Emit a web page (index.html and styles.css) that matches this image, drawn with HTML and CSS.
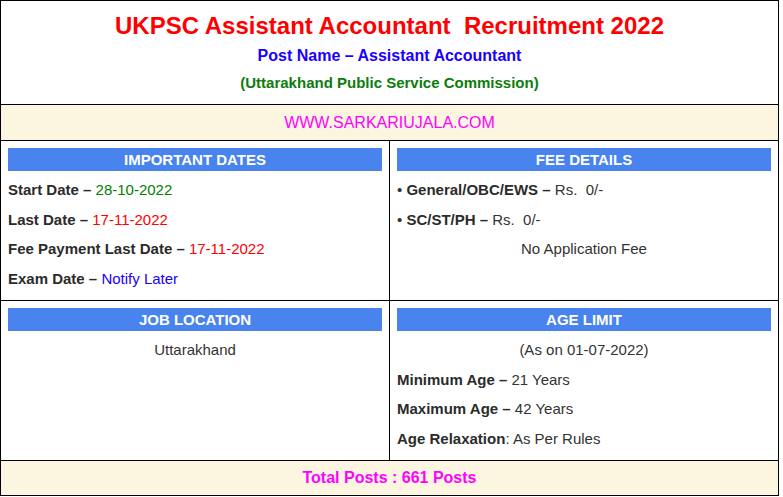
FILE: index.html
```html
<!DOCTYPE html>
<html>
<head>
<meta charset="utf-8">
<link rel="stylesheet" href="styles.css">
</head>
<body>
<div class="board">
  <div class="head">
    <div class="title">UKPSC Assistant Accountant&nbsp; Recruitment 2022</div>
    <div class="post">Post Name – Assistant Accountant</div>
    <div class="org">(Uttarakhand Public Service Commission)</div>
  </div>
  <div class="band site">WWW.SARKARIUJALA.COM</div>
  <div class="grid">
    <div class="cell">
      <div class="cap">IMPORTANT DATES</div>
      <div class="line"><b>Start Date –</b> <span class="green">28-10-2022</span></div>
      <div class="line"><b>Last Date –</b> <span class="red">17-11-2022</span></div>
      <div class="line"><b>Fee Payment Last Date –</b> <span class="red">17-11-2022</span></div>
      <div class="line"><b>Exam Date –</b> <span class="blue">Notify Later</span></div>
    </div>
    <div class="cell">
      <div class="cap">FEE DETAILS</div>
      <div class="line">• <b>General/OBC/EWS –</b> Rs.&nbsp; 0/-</div>
      <div class="line">• <b>SC/ST/PH –</b> Rs.&nbsp; 0/-</div>
      <div class="line center">No Application Fee</div>
    </div>
    <div class="cell">
      <div class="cap">JOB LOCATION</div>
      <div class="line center">Uttarakhand</div>
    </div>
    <div class="cell">
      <div class="cap">AGE LIMIT</div>
      <div class="line center">(As on 01-07-2022)</div>
      <div class="line"><b>Minimum Age –</b> 21 Years</div>
      <div class="line"><b>Maximum Age –</b> 42 Years</div>
      <div class="line"><b>Age Relaxation</b>: As Per Rules</div>
    </div>
  </div>
  <div class="band total">Total Posts : 661 Posts</div>
</div>
</body>
</html>
```

FILE: styles.css
```css
html, body {
  margin: 0;
  padding: 0;
  background: #fff;
}
body {
  font-family: "Liberation Sans", Arial, sans-serif;
  color: #333;
  font-size: 15px;
}
.board {
  width: 777px;
  border: 1px solid #000;
}
.head {
  height: 104px;
  box-sizing: border-box;
  padding-top: 10px;
  text-align: center;
  font-weight: bold;
  border-bottom: 1px solid #000;
}
.title {
  font-size: 24px;
  line-height: 30px;
  color: #ff0000;
}
.post {
  font-size: 16px;
  line-height: 30px;
  color: #1a00ff;
}
.org {
  font-size: 15px;
  line-height: 24px;
  color: #0b7d0b;
}
.band {
  background: #fcf5df;
  color: #ff00ff;
  text-align: center;
  font-size: 16px;
}
.site {
  height: 35px;
  line-height: 36px;
  border-bottom: 1px solid #000;
}
.total {
  height: 34px;
  line-height: 34px;
  font-weight: bold;
  border-top: 1px solid #000;
}
.grid {
  display: grid;
  grid-template-columns: 388px 388px;
  column-gap: 1px;
  row-gap: 1px;
  background: #000;
}
.cell {
  background: #fff;
  padding: 7px 7px 7px;
}
.cap {
  background: #4883ee;
  color: #fff;
  font-weight: bold;
  text-align: center;
  height: 23px;
  line-height: 23px;
  margin-bottom: 4px;
}
.line {
  line-height: 29.5px;
  white-space: nowrap;
}
.line b {
  color: #2b2b2b;
}
.center {
  text-align: center;
}
.green { color: #008000; }
.red { color: #ff0000; }
.blue { color: #1a00ff; }
```
